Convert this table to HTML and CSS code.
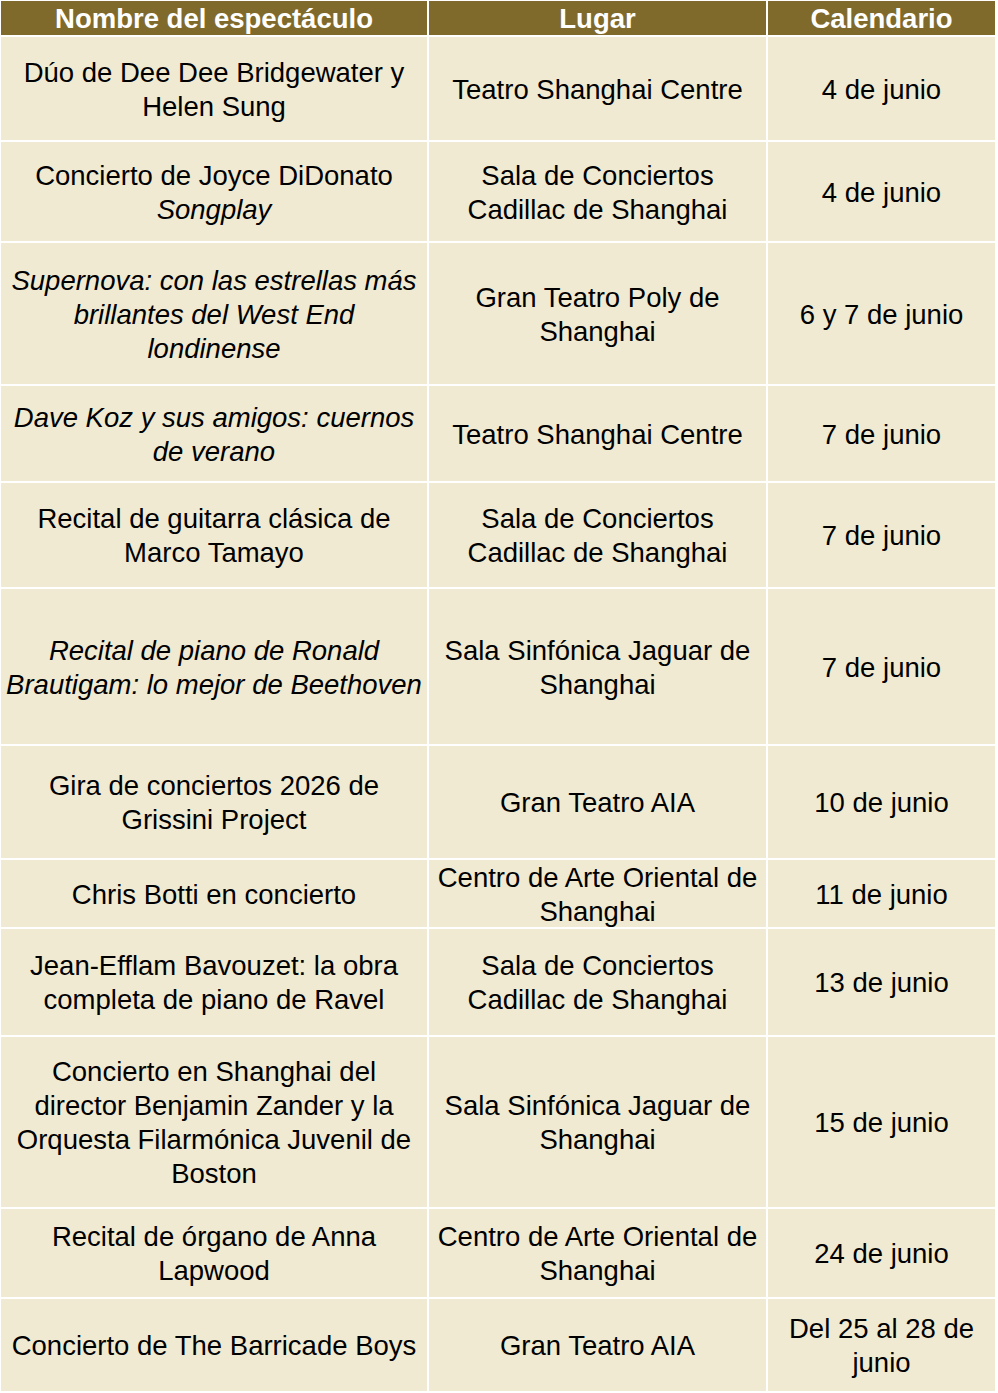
FILE: index.html
```html
<!DOCTYPE html>
<html lang="es">
<head>
<meta charset="utf-8">
<title>Calendario de espectáculos</title>
<link rel="stylesheet" href="styles.css">
</head>
<body>
<div class="schedule">
  <div class="cell head"><span>Nombre del espectáculo</span></div>
  <div class="cell head"><span>Lugar</span></div>
  <div class="cell head"><span>Calendario</span></div>

  <div class="cell"><span>Dúo de Dee Dee Bridgewater y Helen Sung</span></div>
  <div class="cell"><span>Teatro Shanghai Centre</span></div>
  <div class="cell"><span>4 de junio</span></div>

  <div class="cell"><span>Concierto de Joyce DiDonato <em>Songplay</em></span></div>
  <div class="cell"><span>Sala de Conciertos Cadillac de Shanghai</span></div>
  <div class="cell"><span>4 de junio</span></div>

  <div class="cell"><span><em>Supernova: con las estrellas más brillantes del West End londinense</em></span></div>
  <div class="cell"><span>Gran Teatro Poly de Shanghai</span></div>
  <div class="cell"><span>6 y 7 de junio</span></div>

  <div class="cell"><span><em>Dave Koz y sus amigos: cuernos de verano</em></span></div>
  <div class="cell"><span>Teatro Shanghai Centre</span></div>
  <div class="cell"><span>7 de junio</span></div>

  <div class="cell"><span>Recital de guitarra clásica de Marco Tamayo</span></div>
  <div class="cell"><span>Sala de Conciertos Cadillac de Shanghai</span></div>
  <div class="cell"><span>7 de junio</span></div>

  <div class="cell"><span><em>Recital de piano de Ronald Brautigam: lo mejor de Beethoven</em></span></div>
  <div class="cell"><span>Sala Sinfónica Jaguar de Shanghai</span></div>
  <div class="cell"><span>7 de junio</span></div>

  <div class="cell"><span>Gira de conciertos 2026 de Grissini Project</span></div>
  <div class="cell"><span>Gran Teatro AIA</span></div>
  <div class="cell"><span>10 de junio</span></div>

  <div class="cell"><span>Chris Botti en concierto</span></div>
  <div class="cell"><span>Centro de Arte Oriental de Shanghai</span></div>
  <div class="cell"><span>11 de junio</span></div>

  <div class="cell"><span>Jean-Efflam Bavouzet: la obra completa de piano de Ravel</span></div>
  <div class="cell"><span>Sala de Conciertos Cadillac de Shanghai</span></div>
  <div class="cell"><span>13 de junio</span></div>

  <div class="cell"><span>Concierto en Shanghai del director Benjamin Zander y la Orquesta Filarmónica Juvenil de Boston</span></div>
  <div class="cell"><span>Sala Sinfónica Jaguar de Shanghai</span></div>
  <div class="cell"><span>15 de junio</span></div>

  <div class="cell"><span>Recital de órgano de Anna Lapwood</span></div>
  <div class="cell"><span>Centro de Arte Oriental de Shanghai</span></div>
  <div class="cell"><span>24 de junio</span></div>

  <div class="cell"><span>Concierto de The Barricade Boys</span></div>
  <div class="cell"><span>Gran Teatro AIA</span></div>
  <div class="cell"><span>Del 25 al 28 de junio</span></div>
</div>
</body>
</html>
```

FILE: styles.css
```css
html, body {
  margin: 0;
  padding: 0;
  background: #ffffff;
}

body {
  font-family: "Liberation Sans", Arial, sans-serif;
  font-size: 27.5px;
  line-height: 34px;
  color: #000000;
}

.schedule {
  display: grid;
  grid-template-columns: 426px 337px 227px;
  grid-template-rows: 34px 103px 99px 141px 95px 104px 155px 112px 67px 106px 170px 88px 92px;
  gap: 2px;
  padding: 1px;
  width: max-content;
}

.cell {
  background: #f0ead3;
  display: flex;
  align-items: center;
  justify-content: center;
  text-align: center;
  padding: 2px 5px 0;
}

.cell span {
  display: block;
}

.cell em {
  font-style: italic;
}

.head {
  background: #7f6a2c;
  color: #ffffff;
  font-weight: bold;
  line-height: 30px;
}
```
